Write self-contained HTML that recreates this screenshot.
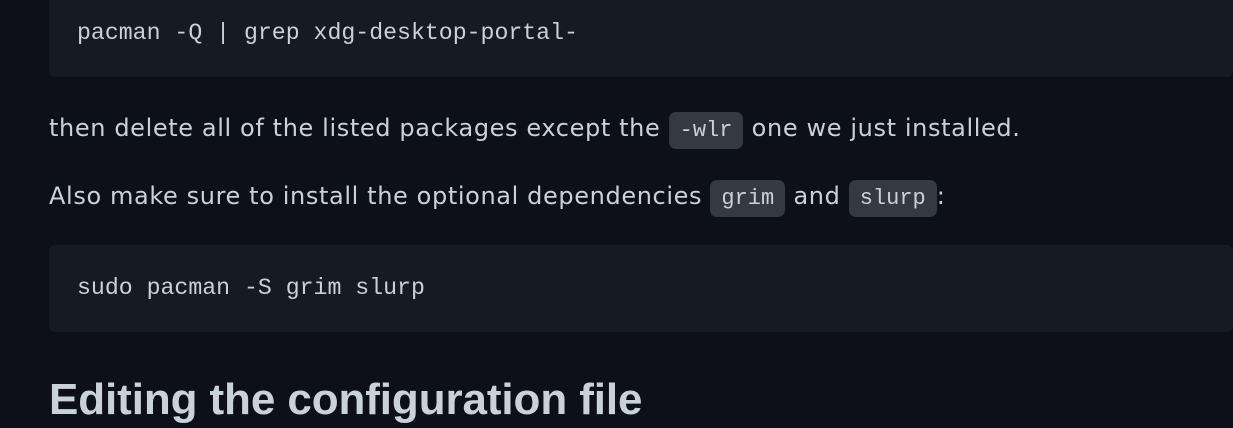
<!DOCTYPE html>
<html><head><meta charset="utf-8"><style>
html,body{margin:0;padding:0;width:1233px;height:428px;overflow:hidden;background:#0d1117;}
body{position:relative;font-family:"DejaVu Sans",sans-serif;color:#c9d1d9;}
.pre{position:absolute;left:49px;right:0;background:#161b22;border-radius:6px;}
.mono{font-family:"Liberation Mono","DejaVu Sans Mono",monospace;}
.pre span{position:absolute;left:28px;font-size:23.2px;line-height:30px;color:#c9d1d9;}
.p{position:absolute;left:49px;font-size:24px;line-height:36px;white-space:nowrap;letter-spacing:0.62px;}
code{font-family:"Liberation Mono",monospace;font-size:22px;letter-spacing:0;background:#343942;border-radius:7px;padding:6px 11px;}
h2{position:absolute;left:49px;top:370px;margin:0;font-family:"Liberation Sans",sans-serif;font-size:44px;line-height:60px;font-weight:bold;color:#c9d1d9;white-space:nowrap;letter-spacing:-0.1px;}
</style></head><body>
<div class="pre" style="top:-10px;height:87px;"><span class="mono" style="top:28px;">pacman -Q | grep xdg-desktop-portal-</span></div>
<div class="p" style="top:110px;">then delete all of the listed packages except the <code>-wlr</code> one we just installed.</div>
<div class="p" style="top:178px;">Also make sure to install the optional dependencies <code>grim</code> and <code>slurp</code>:</div>
<div class="pre" style="top:245px;height:87px;"><span class="mono" style="top:28px;">sudo pacman -S grim slurp</span></div>
<h2>Editing the configuration file</h2>
</body></html>
